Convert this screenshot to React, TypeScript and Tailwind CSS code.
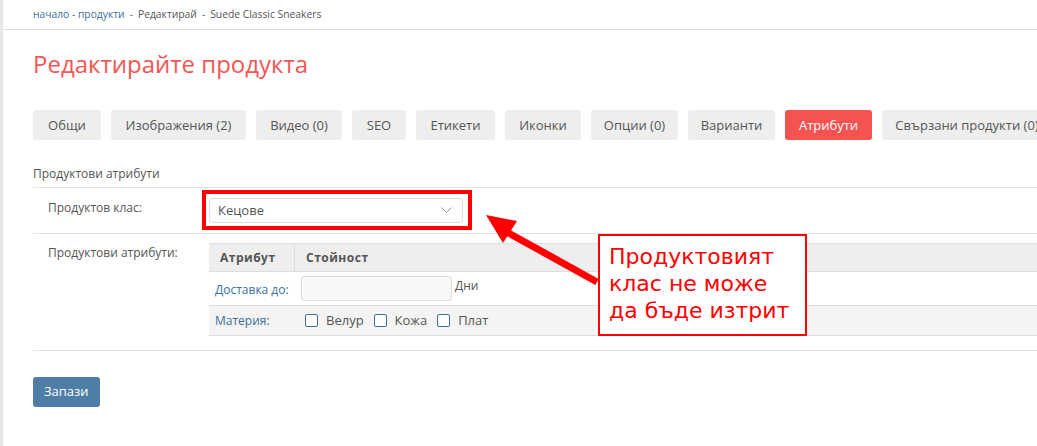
import React from "react";

const tabs = [
  { label: "Общи", w: "w-[68px]" },
  { label: "Изображения (2)", w: "w-[135px]" },
  { label: "Видео (0)", w: "w-[86px]" },
  { label: "SEO", w: "w-[54px]" },
  { label: "Етикети", w: "w-[79px]" },
  { label: "Иконки", w: "w-[76px]" },
  { label: "Опции (0)", w: "w-[87px]" },
  { label: "Варианти", w: "w-[87px]" },
  { label: "Атрибути", w: "w-[87px]", active: true },
  { label: "Свързани продукти (0)", w: "w-[170px]" },
];

function Checkbox({ label }: { label: string }) {
  return (
    <label className="flex items-center gap-[8px] mr-[10px]">
      <span className="w-[13px] h-[13px] rounded-[2px] border border-[#3f6f99] bg-white" />
      <span className="text-[13px] text-[#555]">{label}</span>
    </label>
  );
}

export default function App() {
  return (
    <div className="relative flex min-h-[446px] bg-white font-['Open_Sans',sans-serif] text-[#555] overflow-hidden">
      <div className="w-[3px] shrink-0 bg-[#e6e6e6]" />
      <div className="flex-1 min-w-0">
        {/* Breadcrumb */}
        <div className="h-[30px] border-b border-[#e0e0e0] pl-[30px] flex items-center text-[10.3px]">
          <span className="text-[#3b6f9c]">начало - продукти</span>
          <span className="mx-[5px] text-[#666]">-</span>
          <span className="text-[#555]">Редактирай</span>
          <span className="mx-[5px] text-[#666]">-</span>
          <span className="text-[#555]">Suede Classic Sneakers</span>
        </div>

        <div className="pl-[30px]">
          <h1 className="mt-[17px] text-[24px] leading-[33px] text-[#f55553] font-normal">
            Редактирайте продукта
          </h1>

          {/* Tabs */}
          <div className="mt-[30px] flex gap-[10px] whitespace-nowrap overflow-hidden">
            {tabs.map((t) => (
              <div
                key={t.label}
                className={`h-[30px] ${t.w} rounded-[3px] text-[13px] leading-[30px] text-center shrink-0 ${
                  t.active ? "bg-[#f55252] text-white" : "bg-[#eeeeee] text-[#555]"
                }`}
              >
                {t.label}
              </div>
            ))}
          </div>

          {/* Section */}
          <div className="mt-[25px] h-[23px] border-b border-[#e3e3e3] text-[12px] leading-[17px]">
            Продуктови атрибути
          </div>

          {/* Row: product class */}
          <div className="flex h-[46px] border-b border-[#e3e3e3]">
            <div className="w-[176px] shrink-0 pl-[15px] pt-[11px] text-[12px] leading-[17px]">
              Продуктов клас:
            </div>
            <div className="pt-[10px]">
              <div className="relative">
                <div className="w-[254px] h-[25px] rounded-[3px] border border-[#dedede] bg-white flex items-center justify-between pl-[8px] pr-[10px] text-[13px] text-[#555]">
                  <span>Кецове</span>
                  <svg width="11" height="7" viewBox="0 0 11 7" fill="none">
                    <path d="M0.5 0.5 L5.5 5.5 L10.5 0.5" stroke="#999" strokeWidth="1" />
                  </svg>
                </div>
                <div className="absolute left-[-7px] top-[-8px] right-[-9px] bottom-[-7px] border-[4px] border-[#ff0000]" />
              </div>
            </div>
          </div>

          {/* Row: attributes */}
          <div className="flex border-b border-[#e3e3e3] pb-[14px]">
            <div className="w-[176px] shrink-0 pl-[15px] pt-[10px] text-[12px] leading-[17px]">
              Продуктови атрибути:
            </div>
            <div className="flex-1 min-w-0 pt-[9px]">
              <div className="border-t border-[#e0e0e0]">
                <div className="flex h-[28px] bg-[#eeeeee] border-b border-[#dddddd] text-[12px] font-bold tracking-[0.5px] text-[#555]">
                  <div className="w-[86px] border-r border-[#dddddd] pl-[11px] leading-[27px]">Атрибут</div>
                  <div className="pl-[11px] leading-[27px]">Стойност</div>
                </div>
                <div className="flex h-[34px] border-b border-[#dddddd] bg-white">
                  <div className="w-[86px] pl-[6px] pt-[9px] text-[12px] leading-[17px] text-[#3b6f9c]">Доставка до:</div>
                  <div className="flex items-start pt-[4px] pl-[6px]">
                    <div className="w-[151px] h-[25px] rounded-[3px] border border-[#dddddd] bg-[#f8f8f8]" />
                    <span className="ml-[3px] text-[12px] leading-[17px] pt-[1px] text-[#555]">Дни</span>
                  </div>
                </div>
                <div className="flex h-[30px] border-b border-[#dddddd] bg-[#f4f4f4] items-center">
                  <div className="w-[86px] pl-[6px] text-[12px] leading-[17px] text-[#3b6f9c]">Материя:</div>
                  <div className="flex items-center pl-[10px]">
                    <Checkbox label="Велур" />
                    <Checkbox label="Кожа" />
                    <Checkbox label="Плат" />
                  </div>
                </div>
              </div>
            </div>
          </div>

          <button className="mt-[26px] h-[30px] px-[11px] rounded-[3px] bg-[#4e7ea5] text-white text-[13px]">
            Запази
          </button>
        </div>
      </div>

      {/* Annotation arrow */}
      <svg className="absolute left-0 top-0 pointer-events-none" width="1037" height="446">
        <line x1="597" y1="282" x2="505" y2="231" stroke="#ff0000" strokeWidth="7" />
        <polygon points="486,215 503,243 517,221" fill="#ff0000" />
      </svg>

      {/* Annotation box */}
      <div className="absolute left-[598px] top-[234px] w-[209px] h-[102px] border-2 border-[#ff0000] bg-white pl-[9px] pt-[7px] font-['DejaVu_Sans',sans-serif] text-[22px] leading-[27px] text-[#ff0000]">
        Продуктовият<br />
        клас не може<br />
        да бъде изтрит
      </div>
    </div>
  );
}
